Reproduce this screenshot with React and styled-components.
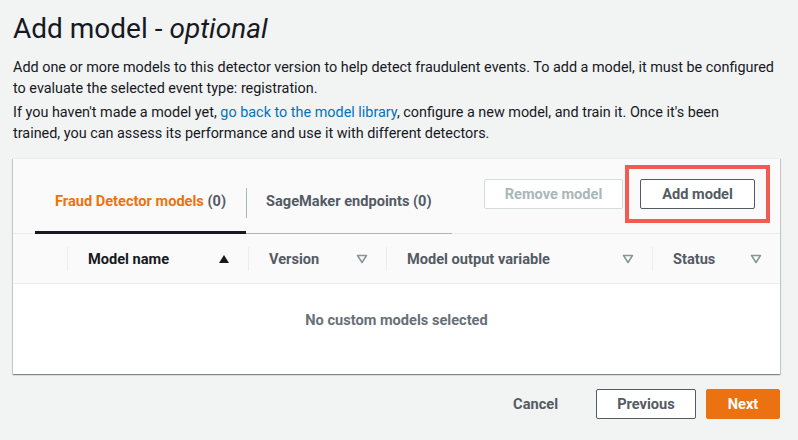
import styled, { createGlobalStyle } from "styled-components";

const Global = createGlobalStyle`
  body {
    margin: 0;
    background: #f2f3f3;
    font-family: Roboto, "Liberation Sans", sans-serif;
    color: #16191f;
  }
`;

function SortIcon({ active }) {
  return active ? (
    <svg width="12" height="10" viewBox="0 0 12 10">
      <path d="M1 9 L6 1 L11 9 Z" fill="#16191f" />
    </svg>
  ) : (
    <svg width="12" height="10" viewBox="0 0 12 10">
      <path d="M1.5 1.5 L10.5 1.5 L6 8.5 Z" fill="none" stroke="#879596" strokeWidth="1.5" strokeLinejoin="round" />
    </svg>
  );
}

function App() {
  return (
    <Page>
      <Global />
      <Title>
        Add model - <em>optional</em>
      </Title>
      <Text>
        Add one or more models to this detector version to help detect fraudulent events. To add a model, it must be configured
        <br />
        to evaluate the selected event type: registration.
      </Text>
      <Text>
        If you haven't made a model yet, <a href="#">go back to the model library</a>, configure a new model, and train it. Once it's been
        <br />
        trained, you can assess its performance and use it with different detectors.
      </Text>

      <Card>
        <CardHead>
          <Tabs>
            <Tab active>
              <span>Fraud Detector models</span> (0)
            </Tab>
            <Tab divided>SageMaker endpoints (0)</Tab>
          </Tabs>
          <Actions>
            <Button disabled>Remove model</Button>
            <Highlight>
              <Button>Add model</Button>
            </Highlight>
          </Actions>
        </CardHead>
        <HeadRow>
          <Col w="54px" />
          <Col w="181px" dark>
            Model name <SortIcon active />
          </Col>
          <Col w="138px">
            Version <SortIcon />
          </Col>
          <Col w="266px">
            Model output variable <SortIcon />
          </Col>
          <Col w="auto" grow>
            Status <SortIcon />
          </Col>
        </HeadRow>
        <Empty>No custom models selected</Empty>
      </Card>

      <Footer>
        <LinkButton>Cancel</LinkButton>
        <Button wide>Previous</Button>
        <Primary>Next</Primary>
      </Footer>
    </Page>
  );
}

const Page = styled.div`
  padding: 11px 18px 0 13px;
  width: 767px;
`;

const Title = styled.h1`
  margin: 0 0 11px;
  font-size: 28px;
  font-weight: 400;
  line-height: 36px;
  em {
    font-style: italic;
  }
`;

const Text = styled.p`
  margin: 0 0 4px;
  font-size: 14.4px;
  line-height: 20.5px;
  white-space: nowrap;
  a {
    color: #0073bb;
    text-decoration: none;
  }
`;

const Card = styled.div`
  margin-top: 14px;
  background: #fff;
  box-shadow: 0 1px 1px 0 rgba(0, 28, 36, 0.3), 1px 1px 1px 0 rgba(0, 28, 36, 0.15),
    -1px 1px 1px 0 rgba(0, 28, 36, 0.15);
  border-top: 1px solid #eaeded;
`;

const CardHead = styled.div`
  display: flex;
  justify-content: space-between;
  background: #fafafa;
  height: 74px;
  border-bottom: 1px solid #eaeded;
`;

const Tabs = styled.div`
  display: flex;
  align-self: flex-end;
  margin-left: 22px;
  border-bottom: 1px solid #aab7b8;
  margin-bottom: -1px;
`;

const Tab = styled.div`
  position: relative;
  padding: 18px 20px 21px;
  font-size: 14.6px;
  font-weight: 700;
  white-space: nowrap;
  color: #545b64;
  border-bottom: 3px solid ${(p) => (p.active ? "#16191f" : "transparent")};
  margin-bottom: -1px;
  span {
    color: #ec7211;
  }
  &::before {
    content: "";
    display: ${(p) => (p.divided ? "block" : "none")};
    position: absolute;
    left: 0;
    top: 14px;
    height: 30px;
    border-left: 1px solid #aab7b8;
  }
`;

const Actions = styled.div`
  display: flex;
  align-items: center;
  gap: 2px;
  padding: 6px 10px 0 0;
  align-self: flex-start;
`;

const Highlight = styled.div`
  border: 4px solid #f25a52;
  padding: 10px 11px;
`;

const Button = styled.button`
  font-family: inherit;
  font-size: 14.6px;
  font-weight: 700;
  white-space: nowrap;
  height: 30px;
  padding: 0;
  background: #fff;
  border: 1px solid ${(p) => (p.disabled ? "#d5dbdb" : "#545b64")};
  border-radius: 2px;
  color: ${(p) => (p.disabled ? "#aab7b8" : "#545b64")};
  width: ${(p) => (p.disabled ? "139px" : p.wide ? "100px" : "115px")};
`;

const HeadRow = styled.div`
  display: flex;
  height: 49px;
  align-items: center;
  border-bottom: 1px solid #eaeded;
  background: #fafafa;
`;

const Col = styled.div`
  display: flex;
  align-items: center;
  justify-content: space-between;
  width: ${(p) => p.w};
  flex: ${(p) => (p.grow ? "1" : "none")};
  box-sizing: border-box;
  height: 24px;
  padding: 0 18px 0 20px;
  font-size: 14.6px;
  font-weight: 700;
  white-space: nowrap;
  color: ${(p) => (p.dark ? "#16191f" : "#545b64")};
  border-left: 1px solid #eaeded;
  &:first-child {
    border-left: none;
  }
`;

const Empty = styled.div`
  height: 90px;
  box-sizing: border-box;
  padding-top: 26px;
  text-align: center;
  line-height: 20px;
  font-size: 14.6px;
  font-weight: 700;
  color: #687078;
`;

const Footer = styled.div`
  display: flex;
  justify-content: flex-end;
  align-items: center;
  gap: 10px;
  margin-top: 15px;
`;

const LinkButton = styled.button`
  font-family: inherit;
  font-size: 14.6px;
  font-weight: 700;
  background: none;
  border: none;
  color: #545b64;
  margin-right: 22px;
`;

const Primary = styled.button`
  font-family: inherit;
  font-size: 14.6px;
  font-weight: 700;
  height: 30px;
  width: 74px;
  background: #ec7211;
  border: 1px solid #ec7211;
  border-radius: 2px;
  color: #fff;
`;

export default App;
